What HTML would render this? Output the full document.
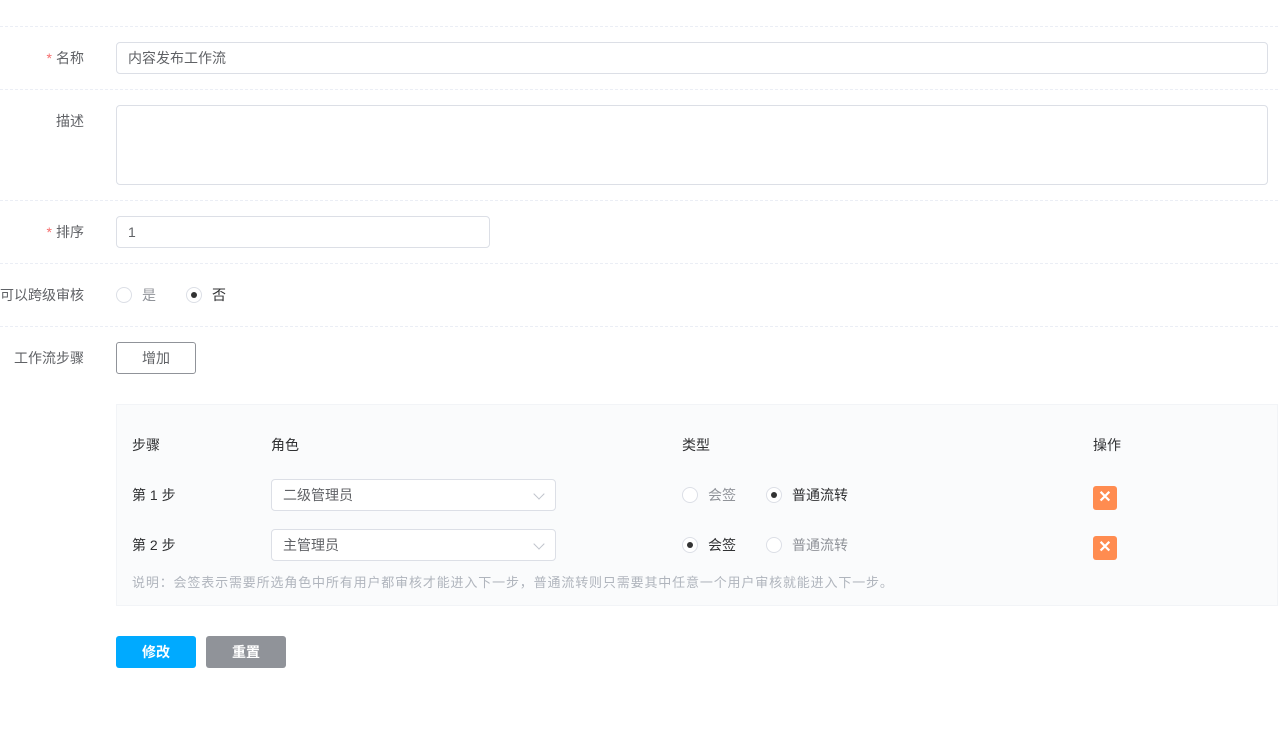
<!DOCTYPE html><html><head><meta charset="utf-8"><style>
body{margin:0;width:1278px;height:741px;background:#fff;font-family:"Liberation Sans","Noto Sans CJK SC",sans-serif;font-size:14px;line-height:20px;color:#606266;position:relative;overflow:hidden}
.a{position:absolute;white-space:nowrap}
.hr{position:absolute;left:0;width:1278px;border-top:1px dashed #ebeef5}
.lbl{position:absolute;right:1194px;text-align:right;white-space:nowrap}
.in{position:absolute;border:1px solid #dcdfe6;border-radius:4px;box-sizing:border-box;background:#fff;padding-left:11px;color:#606266}
.r{position:absolute;width:16px;height:16px;border:1px solid #dcdfe6;border-radius:50%;box-sizing:border-box;background:#fff}
.r.on::after{content:"";position:absolute;left:4px;top:4px;width:6px;height:6px;border-radius:50%;background:#333}
.x{position:absolute;width:24px;height:24px;background:#ff8c50;border-radius:3px;color:#fff;font-weight:bold;text-align:center;line-height:24px;font-size:16px}
.star{color:#f56c6c;margin-right:4px}
.chev{position:absolute;right:12px;top:10px;width:7px;height:7px;border-right:1px solid #c0c4cc;border-bottom:1px solid #c0c4cc;transform:rotate(45deg)}
</style></head><body>
<div class="hr" style="top:26px"></div>
<div class="hr" style="top:89px"></div>
<div class="hr" style="top:200px"></div>
<div class="hr" style="top:263px"></div>
<div class="hr" style="top:326px"></div>
<div class="lbl" style="top:48px"><span class="star">*</span>名称</div>
<div class="in" style="left:116px;top:42px;width:1152px;height:32px;line-height:30px">内容发布工作流</div>
<div class="lbl" style="top:111px">描述</div>
<div class="in" style="left:116px;top:105px;width:1152px;height:80px"></div>
<div class="lbl" style="top:222px"><span class="star">*</span>排序</div>
<div class="in" style="left:116px;top:216px;width:374px;height:32px;line-height:30px">1</div>
<div class="lbl" style="top:285px">可以跨级审核</div>
<div class="r" style="left:116px;top:287px"></div><div class="a" style="left:142px;top:285px;color:#909399">是</div>
<div class="r on" style="left:186px;top:287px"></div><div class="a" style="left:212px;top:285px;color:#303133">否</div>
<div class="lbl" style="top:348px">工作流步骤</div>
<div class="a" style="left:116px;top:342px;width:80px;height:32px;border:1px solid #909399;border-radius:3px;box-sizing:border-box;text-align:center;line-height:30px">增加</div>
<div class="a" style="left:116px;top:404px;width:1162px;height:202px;background:#fafbfc;border:1px solid #f2f4f7;box-sizing:border-box"></div>
<div class="a" style="left:132px;top:435px;color:#303133">步骤</div>
<div class="a" style="left:271px;top:435px;color:#303133">角色</div>
<div class="a" style="left:682px;top:435px;color:#303133">类型</div>
<div class="a" style="left:1093px;top:435px;color:#303133">操作</div>
<div class="a" style="left:132px;top:485px;color:#303133">第 1 步</div>
<div class="in" style="left:271px;top:479px;width:285px;height:32px;line-height:30px">二级管理员<div class="chev"></div></div>
<div class="r" style="left:682px;top:487px"></div><div class="a" style="left:708px;top:485px;color:#909399">会签</div>
<div class="r on" style="left:766px;top:487px"></div><div class="a" style="left:792px;top:485px;color:#303133">普通流转</div>
<div class="x" style="left:1093px;top:486px">✕</div>
<div class="a" style="left:132px;top:535px;color:#303133">第 2 步</div>
<div class="in" style="left:271px;top:529px;width:285px;height:32px;line-height:30px">主管理员<div class="chev"></div></div>
<div class="r on" style="left:682px;top:537px"></div><div class="a" style="left:708px;top:535px;color:#303133">会签</div>
<div class="r" style="left:766px;top:537px"></div><div class="a" style="left:792px;top:535px;color:#909399">普通流转</div>
<div class="x" style="left:1093px;top:536px">✕</div>
<div class="a" style="left:132px;top:573px;color:#b0b5bd;font-size:13px;letter-spacing:0.85px">说明：会签表示需要所选角色中所有用户都审核才能进入下一步，普通流转则只需要其中任意一个用户审核就能进入下一步。</div>
<div class="a" style="left:116px;top:636px;width:80px;height:32px;background:#00aaff;border-radius:3px;color:#fff;text-align:center;line-height:32px;font-weight:bold">修改</div>
<div class="a" style="left:206px;top:636px;width:80px;height:32px;background:#909399;border-radius:3px;color:#fff;text-align:center;line-height:32px;font-weight:bold">重置</div>
</body></html>
